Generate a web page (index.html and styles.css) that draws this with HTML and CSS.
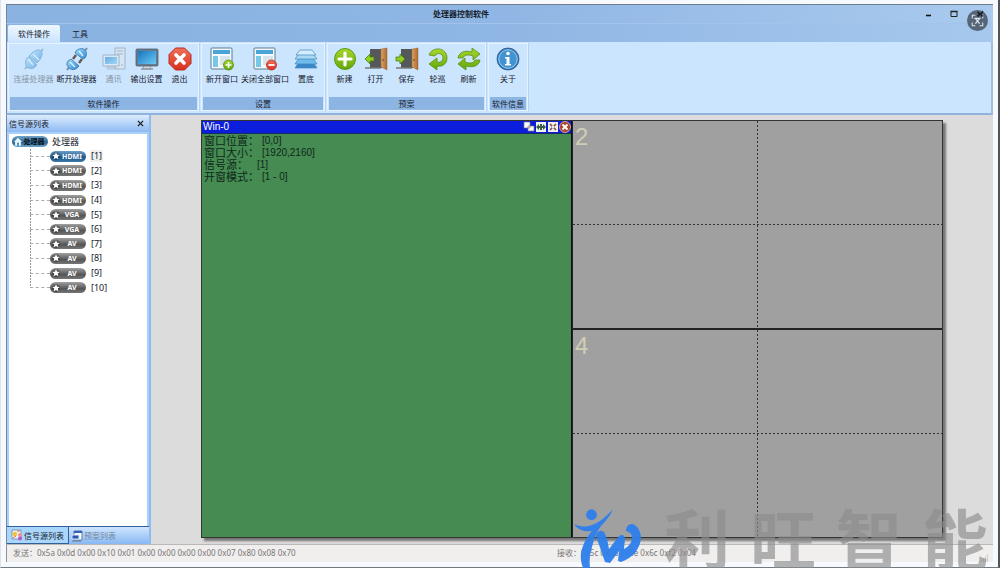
FILE: index.html
```html
<!DOCTYPE html>
<html lang="zh-CN">
<head>
<meta charset="utf-8">
<title>处理器控制软件</title>
<link rel="stylesheet" href="styles.css">
</head>
<body>
<svg class="defs" width="0" height="0" aria-hidden="true">
  <defs>
    <linearGradient id="blue" x1="0" y1="0" x2="1" y2="1"><stop offset="0" stop-color="#a5defa"/><stop offset="1" stop-color="#2b86cf"/></linearGradient>
    <linearGradient id="screen" x1="0" y1="0" x2="1" y2="1"><stop offset="0" stop-color="#1674bd"/><stop offset="1" stop-color="#6ccaf5"/></linearGradient>
    <linearGradient id="green" x1="0" y1="0" x2="0" y2="1"><stop offset="0" stop-color="#a9d62c"/><stop offset="1" stop-color="#62a80c"/></linearGradient>
    <linearGradient id="red" x1="0" y1="0" x2="0" y2="1"><stop offset="0" stop-color="#f0705a"/><stop offset="1" stop-color="#d8301f"/></linearGradient>
    <linearGradient id="wood" x1="0" y1="0" x2="1" y2="0"><stop offset="0" stop-color="#dfa365"/><stop offset="1" stop-color="#a8692f"/></linearGradient>
    <symbol id="i-plug" viewBox="0 0 24 24">
      <path d="M3 22l4-5M17 7l4-5" stroke="#7f8b96" stroke-width="2"/>
      <g stroke="#3577ae" stroke-width=".8" fill="url(#blue)">
        <path d="M5 11l2-1 8 8-2 2c-2 2-6 2-8 0s-2-6 0-9z"/>
        <path d="M10 6c3-3 7-4 9-2s1 6-2 10l-2 2-8-7z"/>
      </g>
      <path d="M6 12l5 6M11 7l6 6" stroke="#d6f2ff" stroke-width="1.5"/>
    </symbol>
    <symbol id="i-unplug" viewBox="0 0 24 24">
      <path d="M2 23l3-4M19 5l3-4" stroke="#7f8b96" stroke-width="2"/>
      <path d="M8 12l3-4M14 16l3-4" stroke="#655b54" stroke-width="2.4"/>
      <g stroke="#3577ae" stroke-width=".8" fill="url(#blue)">
        <path d="M3 14l3-2 8 7-2 2c-2 2-6 2-8 0s-3-4-1-7z"/>
        <path d="M11 4c3-3 7-3 9-1s2 5 0 8l-2 1-8-6z"/>
      </g>
      <path d="M5 15l5 5M14 4l4 5" stroke="#d6f2ff" stroke-width="1.5"/>
    </symbol>
    <symbol id="i-comm" viewBox="0 0 24 24">
      <path d="M13 1h10v21H13z" fill="#dfe5ea" stroke="#78838d"/>
      <path d="M15 4h6M15 7h6M19 18h2" stroke="#78838d"/>
      <path d="M1 8h16v11H1z" fill="#e8edf1" stroke="#78838d"/>
      <path d="M3 10h12v7H3z" fill="url(#screen)"/>
      <path d="M5 20h8v2H5z" fill="#cfd5da" stroke="#78838d" stroke-width=".7"/>
    </symbol>
    <symbol id="i-monitor" viewBox="0 0 24 24">
      <path d="M9 18h6l1 4H8z" fill="#d4d8dc" stroke="#8b9297" stroke-width=".7"/>
      <path d="M6 22h12" stroke="#8b9297" stroke-width="1.4"/>
      <rect x="1" y="2" width="22" height="17" rx="1" fill="#667b8c" stroke="#4c6071" stroke-width=".8"/>
      <path d="M3 4h18v13H3z" fill="url(#screen)"/>
    </symbol>
    <symbol id="i-exit" viewBox="0 0 24 24">
      <path d="M7.500 1h9L23 7.500v9L16.500 23h-9L1 16.500v-9z" fill="url(#red)" stroke="#b92d1e"/>
      <path d="M8 8l8 8M16 8l-8 8" stroke="#fff" stroke-width="3.600" stroke-linecap="round"/>
    </symbol>
    <symbol id="i-window" viewBox="0 0 24 24">
      <rect x="1" y="1" width="21" height="21" rx="1" fill="#f5f8fa" stroke="#587d93"/>
      <path d="M3 3h17v4H3z" fill="#48a5d5"/><path d="M3 9h5v11H3z" fill="#78c6e8"/>
      <path d="M10 9h10v9H10z" fill="#d7e4eb"/>
    </symbol>
    <symbol id="i-win-add" viewBox="0 0 24 24">
      <use href="#i-window"/>
      <circle cx="18.500" cy="18" r="5" fill="url(#green)" stroke="#538d13" stroke-width=".8"/>
      <path d="M18.500 15v6M15.500 18h6" stroke="#fff" stroke-width="1.600"/>
    </symbol>
    <symbol id="i-win-del" viewBox="0 0 24 24">
      <use href="#i-window"/>
      <circle cx="18.500" cy="18" r="5" fill="url(#red)" stroke="#b92d1e" stroke-width=".8"/>
      <path d="M15.500 18h6" stroke="#fff" stroke-width="1.800"/>
    </symbol>
    <symbol id="i-layers" viewBox="0 0 24 24">
      <g stroke="#4785b7" stroke-width=".7">
        <path d="M5 15h14l4 6H1z" fill="#3688c8"/><path d="M5 11h14l4 6H1z" fill="#6ebceb"/>
        <path d="M5 7h14l4 5H1z" fill="#a8daf6"/><path d="M6 3h12l4 5H2z" fill="#d1efff"/>
      </g>
    </symbol>
    <symbol id="i-add" viewBox="0 0 24 24">
      <circle cx="12" cy="12" r="10.500" fill="url(#green)" stroke="#5c9b12"/>
      <path d="M12 6v12M6 12h12" stroke="#fff" stroke-width="3.200" stroke-linecap="round"/>
    </symbol>
    <symbol id="i-door" viewBox="0 0 24 24">
      <path d="M6 2h12v19H6z" fill="#55585a"/>
      <path d="M1 21h16" stroke="#777" stroke-width="1.500"/>
      <path d="M17 2l6-1v22l-6-3z" fill="url(#wood)" stroke="#9e6835" stroke-width=".5"/>
      <path d="M19 12v2" stroke="#724319"/>
    </symbol>
    <symbol id="i-open" viewBox="0 0 24 24"><use href="#i-door"/><path d="M1 12l5-5v3h4v4H6v3z" fill="#91cd22" stroke="#47810e" stroke-width=".8"/></symbol>
    <symbol id="i-save" viewBox="0 0 24 24"><use href="#i-door"/><path d="M10 12L5 7v3H1v4h4v3z" fill="#91cd22" stroke="#47810e" stroke-width=".8"/></symbol>
    <symbol id="i-loop" viewBox="0 0 24 24">
      <path d="M3 8C6-1 21 0 21 11c0 7-6 9-10 8v4l-8-6 8-6v4c3 1 6-1 6-4 0-5-6-6-8-2z" fill="url(#green)" stroke="#558f0e" stroke-width=".8"/>
    </symbol>
    <symbol id="i-refresh" viewBox="0 0 24 24">
      <path d="M1 11C2 5 8 3 15 5V1l8 6-7 6V9C11 7 7 8 6 11zM23 13c-1 6-7 8-14 6v4l-8-6 7-6v4c5 2 9 1 10-2z" fill="url(#green)" stroke="#558f0e" stroke-width=".8"/>
    </symbol>
    <symbol id="i-info" viewBox="0 0 24 24">
      <circle cx="12" cy="12" r="11" fill="#2c6fb1" stroke="#245b93" stroke-width=".8"/>
      <circle cx="12" cy="12" r="9.300" fill="#4193d2" stroke="#c1e2f6" stroke-width=".8"/>
      <circle cx="12" cy="6.500" r="1.800" fill="#fff"/><path d="M9 10h4.500v7H15v1.500H9V17h1.500v-5.500H9z" fill="#fff"/>
    </symbol>
    <symbol id="i-star" viewBox="0 0 12 12">
      <circle cx="6" cy="6" r="5" fill="#000" fill-opacity=".25"/>
      <path d="M6 1.500l1.300 3 3.200.2-2.400 2 .8 3.300L6 8.300 3.100 10l.8-3.300-2.400-2 3.200-.2z" fill="#fff"/>
    </symbol>
    <symbol id="i-home" viewBox="0 0 12 12"><path d="M6 1l5 5H9.500v4.500H7V7H5v3.500H2.500V6H1z" fill="#e3f5ff"/></symbol>
  </defs>
</svg>

<div class="app">
  <header class="titlebar">
    <h1 class="title">处理器控制软件</h1>
    <div class="winbtns">
      <button class="winbtn" aria-label="最小化"><svg viewBox="0 0 8 8"><path d="M2 5.500h5" stroke="#111" stroke-width="1.600"/></svg></button>
      <button class="winbtn" aria-label="最大化"><svg viewBox="0 0 8 8"><path d="M1 1.500h6v5H1z" fill="none" stroke="#222"/><path d="M.500 1.500h7" stroke="#222" stroke-width="1.500"/></svg></button>
      <button class="winbtn" aria-label="关闭"><svg viewBox="0 0 8 8"><path d="M1 1l6 6M7 1L1 7" stroke="#111" stroke-width="1.500"/></svg></button>
    </div>
  </header>
  <nav class="tabs">
    <button class="tab tab-active">软件操作</button>
    <button class="tab">工具</button>
  </nav>
  <section class="ribbon">
    <div class="group group-ops">
      <div class="tools">
        <button class="tool" disabled><svg><use href="#i-plug"/></svg>连接处理器</button>
        <button class="tool"><svg><use href="#i-unplug"/></svg>断开处理器</button>
        <button class="tool" disabled><svg><use href="#i-comm"/></svg>通讯</button>
        <button class="tool"><svg><use href="#i-monitor"/></svg>输出设置</button>
        <button class="tool"><svg><use href="#i-exit"/></svg>退出</button>
      </div>
      <h2 class="group-name">软件操作</h2>
    </div>
    <div class="group group-set">
      <div class="tools">
        <button class="tool"><svg><use href="#i-win-add"/></svg>新开窗口</button>
        <button class="tool"><svg><use href="#i-win-del"/></svg>关闭全部窗口</button>
        <button class="tool"><svg><use href="#i-layers"/></svg>置底</button>
      </div>
      <h2 class="group-name">设置</h2>
    </div>
    <div class="group group-plan">
      <div class="tools">
        <button class="tool"><svg><use href="#i-add"/></svg>新建</button>
        <button class="tool"><svg><use href="#i-open"/></svg>打开</button>
        <button class="tool"><svg><use href="#i-save"/></svg>保存</button>
        <button class="tool"><svg><use href="#i-loop"/></svg>轮巡</button>
        <button class="tool"><svg><use href="#i-refresh"/></svg>刷新</button>
      </div>
      <h2 class="group-name">预案</h2>
    </div>
    <div class="group group-info">
      <div class="tools">
        <button class="tool"><svg><use href="#i-info"/></svg>关于</button>
      </div>
      <h2 class="group-name">软件信息</h2>
    </div>
  </section>

  <main class="work">
    <aside class="side">
      <div class="side-head">
        <h2 class="side-title">信号源列表</h2>
        <button class="side-close" aria-label="关闭面板"><svg viewBox="0 0 8 8"><path d="M1 1l6 6M7 1L1 7" stroke="#111" stroke-width="1.300"/></svg></button>
      </div>
      <div class="tree">
        <div class="root"><span class="badge badge-root"><svg><use href="#i-home"/></svg><span class="badge-text">处理器</span></span>处理器</div>
        <ul class="nodes">
          <li class="node"><span class="badge badge-on"><svg><use href="#i-star"/></svg><span class="badge-text">HDMI</span></span><span class="num num-on">[1]</span></li>
          <li class="node"><span class="badge"><svg><use href="#i-star"/></svg><span class="badge-text">HDMI</span></span><span class="num">[2]</span></li>
          <li class="node"><span class="badge"><svg><use href="#i-star"/></svg><span class="badge-text">HDMI</span></span><span class="num">[3]</span></li>
          <li class="node"><span class="badge"><svg><use href="#i-star"/></svg><span class="badge-text">HDMI</span></span><span class="num">[4]</span></li>
          <li class="node"><span class="badge"><svg><use href="#i-star"/></svg><span class="badge-text">VGA</span></span><span class="num">[5]</span></li>
          <li class="node"><span class="badge"><svg><use href="#i-star"/></svg><span class="badge-text">VGA</span></span><span class="num">[6]</span></li>
          <li class="node"><span class="badge"><svg><use href="#i-star"/></svg><span class="badge-text">AV</span></span><span class="num">[7]</span></li>
          <li class="node"><span class="badge"><svg><use href="#i-star"/></svg><span class="badge-text">AV</span></span><span class="num">[8]</span></li>
          <li class="node"><span class="badge"><svg><use href="#i-star"/></svg><span class="badge-text">AV</span></span><span class="num">[9]</span></li>
          <li class="node"><span class="badge"><svg><use href="#i-star"/></svg><span class="badge-text">AV</span></span><span class="num">[10]</span></li>
        </ul>
      </div>
      <div class="side-tabs">
        <button class="side-tab side-tab-active"><svg viewBox="0 0 12 12"><path d="M1 1h9v9H1z" fill="#e8f2fb" stroke="#6889ae" stroke-width=".8"/><circle cx="4" cy="5" r="2.200" fill="#f5c425"/><path d="M6 2h3M2 9l3-2" stroke="#e0742c"/><circle cx="9" cy="6" r="2" fill="#ef8f9b"/><circle cx="9" cy="9.500" r="2" fill="#ae58c9"/></svg>信号源列表</button>
        <button class="side-tab"><svg viewBox="0 0 12 12"><path d="M3 1h8v9H3z" fill="#fff" stroke="#5578aa"/><path d="M3 2h8" stroke="#2f62b8" stroke-width="2"/><path d="M1 5h7v4H1z" fill="#2458b5" stroke="#dce8f6"/><path d="M1 11h9" stroke="#66788e"/></svg>预案列表</button>
      </div>
    </aside>
    <div class="desk">
      <div class="wall">
        <section class="win">
          <div class="win-bar">
            <h3 class="win-title">Win-0</h3>
            <button class="win-btn" aria-label="还原"><svg viewBox="0 0 12 12"><path d="M1 1h6v6H1zM5 5h6v5H5z" fill="#fff" stroke="#777" stroke-width=".7"/></svg></button>
            <button class="win-btn" aria-label="放大"><svg viewBox="0 0 12 12"><path d="M1 1h10v10H1z" fill="#f1f5ef"/><path d="M1 6l3-3v2h4V3l3 3-3 3V7H4v2z" fill="#355c43"/><path d="M6 3v6" stroke="#355c43" stroke-width="2"/></svg></button>
            <button class="win-btn" aria-label="全屏"><svg viewBox="0 0 12 12"><path d="M1 1h10v10H1z" fill="#f5eeea"/><path d="M3 3l6 6M9 3L3 9" stroke="#6c5650" stroke-width="1.500" stroke-dasharray="3 2.500"/></svg></button>
            <button class="win-btn" aria-label="关闭窗口"><svg viewBox="0 0 12 12"><circle cx="6" cy="6" r="5.500" fill="#a9412d" stroke="#e6c0b3" stroke-width=".8"/><path d="M3.500 3.500l5 5M8.500 3.500l-5 5" stroke="#fff" stroke-width="2"/></svg></button>
          </div>
          <dl class="facts">
            <div class="fact"><dt>窗口位置：</dt><dd>[0,0]</dd></div>
            <div class="fact"><dt>窗口大小：</dt><dd>[1920,2160]</dd></div>
            <div class="fact fact-gap"><dt>信号源：</dt><dd>[1]</dd></div>
            <div class="fact"><dt>开窗模式：</dt><dd>[1 - 0]</dd></div>
          </dl>
        </section>
        <div class="screen screen-top">2</div>
        <div class="screen screen-bottom">4</div>
      </div>
    </div>
  </main>

  <footer class="status">
    <span class="sent">发送：0x5a 0x0d 0x00 0x10 0x01 0x00 0x00 0x00 0x00 0x07 0x80 0x08 0x70</span>
    <span class="received">接收：0x5c 0x06 0x0e 0x6c 0xf2 0x04</span>
    <svg class="grip" viewBox="0 0 8 8"><path d="M6 1h1M4 3h1M6 3h1M2 5h1M4 5h1M6 5h1M0 7h1M2 7h1M4 7h1M6 7h1" stroke="#aaa"/></svg>
  </footer>
</div>

<button class="capture" aria-label="截图"><svg viewBox="0 0 20 20"><g fill="none" stroke="#dce4eb"><path d="M5 8V5h3M12 5h3v3M15 12v3h-3M8 15H5v-3"/><path d="M7 8h6M8 13l4-5M8 8l4 5" stroke-width="1.200"/></g><path d="M10 2l5 4M15 2l-5 4" stroke="#161b22" stroke-width="1.500"/></svg></button>

<div class="mark">
  <svg class="mark-logo" viewBox="0 0 68 60">
    <g fill="#2e80ec">
      <circle cx="17.500" cy="6.700" r="5.400"/>
      <path d="M0 16c4 2 10 3 15 2C25 15 32 9 39 1 36 8 32 13 27 18 21 26 20 32 18 39c-2 7-3 13-2 21H9C6 52 6 45 9 38c2-6 5-10 9-15-6 1-13 0-18-7z"/>
      <path d="M22 28c0-4 5-7 8-4 3 5 4 11 5 17l10-13c3-2 6-1 6 3l-1 10c6-3 8-8 8-11 0-4-2-6-6-7 0-4 2-7 6-7 5 1 9 7 9 14-1 11-8 20-20 24l-3-1 1-10-9 12-5-1c-3-9-6-17-9-26z"/>
    </g>
  </svg>
  <div class="mark-text"><span>利</span><span>旺</span><span>智</span><span>能</span></div>
</div>
</body>
</html>
```

FILE: styles.css
```css
* { box-sizing: border-box; }

body {
  margin: 0;
  font-family: "Noto Sans", "Noto Sans CJK SC", sans-serif;
  font-size: 8px;
  color: #16202c;
}

h1, h2, h3, ul, dl, dd { margin: 0; padding: 0; font-size: inherit; font-weight: 400; }
button { margin: 0; padding: 0; border: 0; background: none; font: inherit; color: inherit; }
.defs { position: absolute; }

.app {
  display: flex;
  flex-direction: column;
  min-height: 100vh;
  padding: 4px 5px 5px 5px;
  background: #f6f9fd;
  border-left: 1px solid #dfe2e8;
  border-right: 2px solid #505459;
  border-bottom: 1px solid #74797f;
}

.titlebar {
  position: relative;
  display: flex;
  align-items: center;
  justify-content: center;
  height: 20px;
  border-top: 1px solid #6f7c8c;
  border-left: 1px solid #6f87a5;
  border-bottom: 1px solid #a2c4ec;
  background: linear-gradient(90deg, #8ab3e1, #8fb6e4 50%, #a9caee);
}
.title { margin-right: 78px; font-weight: 700; line-height: 12px; }
.winbtns { position: absolute; right: 9px; top: 5px; display: flex; gap: 18px; }
.winbtn, .winbtn svg { display: block; width: 8px; height: 8px; }

.tabs {
  display: flex;
  height: 18px;
  padding: 1px 1px 0;
  border-left: 1px solid #6f87a5;
  background: linear-gradient(90deg, #89b2e1, #8fb6e4 50%, #a6c8ed);
}
.tab { width: 40px; line-height: 16px; }
.tab-active {
  width: 52px;
  border-radius: 2px 2px 0 0;
  background: linear-gradient(#eef7ff, #cbe5ff);
}

.ribbon {
  display: flex;
  gap: 2px;
  height: 73px;
  padding: 1px 1px 2px;
  background: #cbe5ff;
  border-left: 1px solid #6f87a5;
  border-right: 2px solid #a2bddb;
  border-bottom: 2px solid #91b3db;
}
.group {
  display: flex;
  flex-direction: column;
  justify-content: space-between;
  padding: 3px 1px 0;
  border: 1px solid #e6f3ff;
  box-shadow: 1px 0 0 #b5d4f4;
}
.group-ops { width: 191px; }
.group-set { width: 124px; }
.group-plan { width: 159px; }
.group-info { width: 40px; }
.tools { display: flex; justify-content: center; gap: 1px; }
.tool {
  min-width: 30px;
  padding: 0 1px;
  line-height: 12px;
  white-space: nowrap;
}
.tool svg { display: block; width: 24px; height: 24px; margin: 0 auto 2px; }
.tool:disabled { color: #8693a1; }
.tool:disabled svg { opacity: .5; }
.group-name { line-height: 13px; text-align: center; background: #8db5e4; white-space: nowrap; }

.work { display: flex; flex: 1; }
.side {
  display: flex;
  flex-direction: column;
  width: 145px;
  border-left: 1px solid #6f87a5;
  border-right: 2px solid #8fbcf0;
  background: #a7d0fb;
}
.side-head {
  display: flex;
  align-items: center;
  justify-content: space-between;
  height: 17px;
  padding: 0 5px 0 2px;
  background: linear-gradient(#dcecff, #8dbaf2);
}
.side-close, .side-close svg { display: block; width: 7px; height: 7px; }
.tree {
  flex: 1;
  margin: 2px 2px 0;
  background: #fff;
  font-size: 9px;
}
.root { display: flex; align-items: center; gap: 4px; height: 15px; padding-left: 3px; }
.badge {
  display: flex;
  align-items: center;
  width: 36px;
  height: 11px;
  padding: 0 3px 0 1px;
  border-radius: 6px;
  background: linear-gradient(#a0a0a0, #555 60%, #777);
  color: #fff;
  font-size: 7px;
  font-weight: 700;
  line-height: 11px;
}
.badge svg { width: 10px; height: 10px; }
.badge-text { flex: 1; text-align: center; }
.badge-on { background: linear-gradient(#6c9fc7, #1c568b 60%, #3e7bab); }
.badge-root { background: linear-gradient(#6fa4c9, #2d648f 60%, #6fa8cc); color: #0b1622; }
.nodes {
  display: grid;
  grid-auto-rows: 1fr;
  height: 146px;
  margin-left: 21px;
  list-style: none;
  background: repeating-linear-gradient(#999 0 2px, transparent 2px 3px) 0 0 / 1px 139px no-repeat;
}
.node { display: flex; align-items: center; }
.node::before { content: ""; width: 20px; border-top: 1px dashed #aaa; }
.num { margin-left: 4px; padding: 0 1px; line-height: 12px; }
.num-on { background: #f0f0f0; }

.side-tabs {
  display: flex;
  height: 18px;
  border-top: 1px solid #315f9e;
  background: linear-gradient(#cfe5fe, #88b8f3);
}
.side-tab { display: flex; align-items: center; gap: 1px; padding: 0 4px 0 2px; color: #75879b; }
.side-tab svg { width: 12px; height: 12px; }
.side-tab-active {
  padding-left: 4px;
  color: #16202c;
  background: #abd6fb;
  border-right: 1px solid #315f9e;
  border-bottom: 1px solid #315f9e;
}

.desk { display: flex; flex: 1; padding: 5px 50px 6px; background: #dcdcdc; }
.wall {
  flex: 1;
  display: grid;
  grid-template: 1fr 1fr / 1fr 1fr;
  border: 1px solid #333;
  background: #a0a0a0;
  box-shadow: 3px 3px 2px #777;
}
.win { grid-row: 1 / 3; background: #458b52; border-right: 1px solid #111; }
.win-bar { display: flex; align-items: center; height: 13px; background: #0a1edc; border-bottom: 1px solid #142d63; }
.win-title { flex: 1; padding-left: 1px; color: #fff; font: 10px/12px "Liberation Sans", sans-serif; }
.win-btn, .win-btn svg { display: block; width: 12px; height: 12px; }
.facts { padding: 1px 2px; color: #10281a; font-size: 11px; line-height: 12px; }
.fact { display: flex; gap: 3px; height: 12px; }
.fact dd { font: 10px/12px "Liberation Sans", sans-serif; }
.fact-gap { gap: 9px; }
.screen {
  padding: 2px;
  color: #d0ceb5;
  font: 24px/28px "Liberation Sans", sans-serif;
  border-left: 1px solid #222;
  background:
    repeating-linear-gradient(90deg, #333 0 2px, transparent 2px 4px) 0 50% / 100% 1px no-repeat,
    repeating-linear-gradient(#333 0 2px, transparent 2px 4px) 50% 0 / 1px 100% no-repeat;
}
.screen-top { border-bottom: 1px solid #222; }
.screen-bottom { border-top: 1px solid #222; }

.status {
  display: grid;
  grid-template-columns: 544fr 424fr 12px;
  height: 18px;
  padding-left: 6px;
  border-left: 1px solid #8d9298;
  border-top: 1px solid #b9b9b9;
  background: #f1eeee;
  color: #777;
  line-height: 16px;
  white-space: nowrap;
}
.grip { width: 8px; height: 8px; align-self: end; }

.capture {
  position: absolute;
  top: 10px;
  right: 12px;
  width: 21px;
  height: 21px;
  border-radius: 50%;
  background: #566577;
}
.capture svg { display: block; width: 21px; height: 21px; }

.mark {
  position: absolute;
  right: 12px;
  bottom: 0;
  display: flex;
  align-items: flex-start;
  gap: 22px;
  height: 60px;
  pointer-events: none;
}
.mark-logo { width: 68px; height: 60px; opacity: .95; }
.mark-text {
  display: flex;
  gap: 20px;
  color: rgba(140, 140, 140, .65);
  font: 700 66px/56px "Noto Sans CJK SC", sans-serif;
}
```
